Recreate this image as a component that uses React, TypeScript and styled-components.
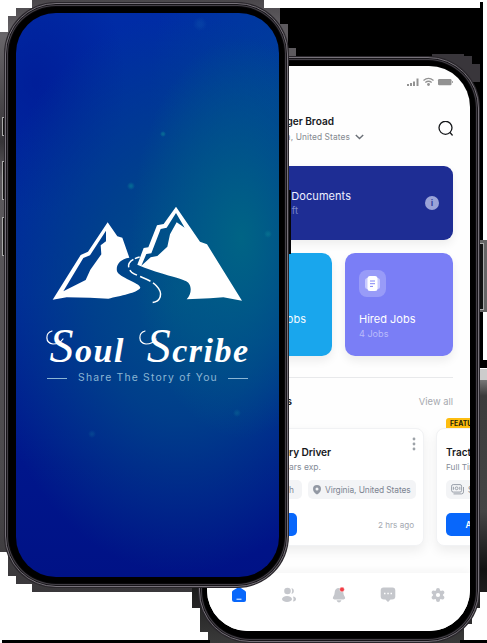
import React from "react";
import styled, { createGlobalStyle } from "styled-components";

const Global = createGlobalStyle`
  * { box-sizing: border-box; }
  body { margin: 0; background: #fff; font-family: Inter, "Liberation Sans", sans-serif; }
`;

const Stage = styled.main`
  display: grid;
  grid-template: 643px / 487px;
  width: 487px;
  height: 643px;
  overflow: hidden;
  > * { grid-area: 1 / 1; }
`;

const Phone = styled.section<{ $x: number; $y: number; $w: number; $h: number; $pad: string }>`
  isolation: isolate;
  width: ${p => p.$w}px;
  height: ${p => p.$h}px;
  margin: ${p => p.$y}px 0 0 ${p => p.$x}px;
  padding: ${p => p.$pad};
  border-radius: 51px;
  background: #000;
  border: 1px solid #77727a;
  box-shadow: inset 0 0 0 1px #161418, inset 0 0 0 2px #444047, inset 0 0 0 3px #09080a, 0 0 0 1px #29262b;
`;

const Splash = styled.div`
  height: 100%;
  border-radius: 40px;
  display: flex;
  flex-direction: column;
  align-items: center;
  padding-top: 182px;
  color: #fff;
  background:
    radial-gradient(circle at 115px 173px, #08869a88 0 1px, transparent 4px),
    radial-gradient(circle at 184px 11px, #1460b044 0 2px, transparent 7px),
    radial-gradient(circle at 147px 121px, #0d879988 0 1px, transparent 3px),
    radial-gradient(circle at 252px 221px, #0d879966 0 1px, transparent 4px),
    radial-gradient(circle at 221px 400px, #0d709966 0 1px, transparent 4px),
    radial-gradient(circle at 76px 421px, #0d609966 0 1px, transparent 4px),
    radial-gradient(ellipse 110px 200px at 225px 225px, #006485 0, #00608799 45%, transparent 100%),
    radial-gradient(ellipse 200px 280px at 165px 280px, #005088 0, #004689cc 45%, transparent 100%),
    radial-gradient(ellipse 130px 190px at 263px 80px, #004a94aa, transparent),
    radial-gradient(ellipse 90px 130px at 20px 70px, #00149088, transparent),
    linear-gradient(#002ca6 0, #00279a 50%, #00168b 80%, #001286 100%);
`;

const Wordmark = styled.h1`
  position: relative;
  width: 204px;
  height: 48px;
  margin: 9px 0 0;
  display: flex;
  justify-content: space-between;
  align-items: center;
  padding: 0 0 0 4px;
  font: italic 700 34px/48px "Liberation Serif", serif;
  letter-spacing: 1.5px;
  span::first-letter { font-size: 48px; font-weight: 400; }
`;

const Swash = styled.svg`
  position: absolute;
  inset: 0;
`;

const Tagline = styled.div`
  display: flex;
  align-items: center;
  gap: 11px;
  margin-top: -1px;
  font-size: 10.4px;
  line-height: 14px;
  letter-spacing: 1.18px;
  color: #8bb6d4;
  white-space: nowrap;
  &::before, &::after { content: ""; width: 20px; height: 1px; background: #8bb6d4; }
  &::after { margin-left: -1px; }
`;

const Home = styled.div`
  height: 100%;
  width: 263px;
  border-radius: 41px;
  overflow: hidden;
  display: flex;
  flex-direction: column;
  background: #fefefe;
  padding: 0 17px;
`;

const StatusBar = styled.div`
  display: flex;
  justify-content: flex-end;
  align-items: center;
  height: 12px;
  margin-top: 10px;
`;

const Header = styled.header`
  display: flex;
  justify-content: space-between;
  align-items: center;
  height: 32px;
  margin-top: 25px;
`;

const Line = styled.div<{ $w?: number; $size: number; $lh: number; $color?: string; $weight?: number; $ls?: number }>`
  display: flex;
  justify-content: ${p => (p.$w ? "flex-end" : "flex-start")};
  align-items: center;
  width: ${p => (p.$w ? `${p.$w}px` : "auto")};
  font-size: ${p => p.$size}px;
  line-height: ${p => p.$lh}px;
  font-weight: ${p => p.$weight ?? 400};
  letter-spacing: ${p => p.$ls ?? 0}px;
  color: ${p => p.$color ?? "#17191c"};
  white-space: nowrap;
  svg { margin-left: 5px; flex: none; }
`;

const Banner = styled.div`
  display: flex;
  justify-content: space-between;
  align-items: center;
  height: 74px;
  margin-top: 21px;
  padding-right: 14px;
  border-radius: 9px;
  background: #1e2d94;
  box-shadow: 0 4px 10px #00000012;
`;

const Info = styled.span`
  width: 14px;
  height: 14px;
  border-radius: 50%;
  background: #9aa3d8;
  color: #37459f;
  font: 700 9px/14px Inter, sans-serif;
  text-align: center;
`;

const Cards = styled.div`
  display: grid;
  grid-template-columns: 1fr 1fr;
  gap: 13px;
  margin-top: 13px;
`;

const StatCard = styled.article<{ $bg: string }>`
  height: 103px;
  border-radius: 10px;
  padding: 17px 14px 0;
  background: ${p => p.$bg};
  box-shadow: 0 5px 10px #00000012;
`;

const IconTile = styled.div`
  width: 27px;
  height: 27px;
  border-radius: 8px;
  margin-bottom: 14px;
  display: grid;
  place-items: center;
  background: #ffffff3b;
`;

const SectionHead = styled.div`
  display: flex;
  justify-content: space-between;
  align-items: center;
  height: 48px;
  margin: 21px 0 2px;
  border-top: 1px solid #e8e9eb;
`;

const JobList = styled.div`
  display: flex;
  gap: 12px;
  margin-top: 1px;
`;

const Job = styled.article`
  position: relative;
  flex: none;
  width: 200px;
  height: 118px;
  padding: 15px 7px 0 9px;
  border: 1px solid #f1f2f4;
  border-radius: 8px;
  background: #fff;
  box-shadow: 0 5px 12px #00000012;
`;

const Badge = styled.span`
  position: absolute;
  left: 9px;
  top: -11px;
  height: 10px;
  padding: 0 4px;
  border-radius: 3px 3px 0 0;
  background: #fdbd10;
  color: #241d0a;
  font-size: 6.9px;
  line-height: 11px;
  font-weight: 700;
`;

const Dots = styled.svg`
  position: absolute;
  right: 7px;
  top: 8px;
`;

const Chips = styled.div`
  display: flex;
  gap: 6px;
  margin-top: 6px;
`;

const Chip = styled.span<{ $w: number; $end?: boolean }>`
  display: flex;
  align-items: center;
  justify-content: ${p => (p.$end ? "space-between" : "flex-start")};
  gap: 4px;
  width: ${p => p.$w}px;
  flex: none;
  height: 19px;
  padding: 0 8px 0 5px;
  border-radius: 5px;
  background: #f3f4f6;
  color: #7d8592;
  font-size: 8.4px;
  letter-spacing: -0.08px;
  white-space: nowrap;
  svg { flex: none; }
`;

const JobFoot = styled.div`
  display: flex;
  justify-content: space-between;
  align-items: center;
  margin: 14px 2px 0 0;
`;

const Apply = styled.button`
  width: 63px;
  height: 23px;
  border: 0;
  border-radius: 5px;
  padding: 0;
  background: #0867fb;
  color: #fff;
  font: 600 8.5px Inter, sans-serif;
`;

const TabBar = styled.nav`
  display: flex;
  justify-content: space-between;
  align-items: flex-start;
  margin: 27px -17px 0;
  padding: 14px 24px 0;
  height: 58px;
  background: #fff;
  box-shadow: 0 -3px 7px #00000009;
`;

/* Dark stepped shadow and plates behind both devices. */
const Backdrop = () => (
  <svg width="487" height="643" shapeRendering="crispEdges">
    <defs>
      <linearGradient id="leftFade" x2="0" y2="1">
        <stop offset="0" stopColor="#4a474b" /><stop offset=".06" stopColor="#69666a" /><stop offset=".24" stopColor="#363437" />
        <stop offset=".3" stopColor="#5c595d" /><stop offset=".8" stopColor="#4b494c" />
        <stop offset="1" stopColor="#39373a" />
      </linearGradient>
      <linearGradient id="rightFade" x2="0" y2="1">
        <stop offset="0" stopColor="#777" /><stop offset=".06" stopColor="#3b3b3b" />
        <stop offset=".5" stopColor="#444" /><stop offset=".72" stopColor="#111" /><stop offset="1" stopColor="#3a3a3a" />
      </linearGradient>
    </defs>
    <path d="M280 8H480V2H483V240H470V80H280Z" fill="#000" />
    <path d="M32 0H264V8H280V24H288V48H296V56H288V580H264V592H32V584H16V576H8V552H0V32H8V16H16V8H32Z" fill="url(#leftFade)" />
    <path d="M280 8H288V56H280Z" fill="#000" />
    <path d="M280 24H288V48H296V56H280Z" fill="#5d5a5e" />
    <path d="M432 54H464V56H472V64H480V82H432Z" fill="#39363b" />
    <path d="M480 240H487V312H480Z" fill="#666" />
    <path d="M480 312H483V360H487V368H480Z" fill="#000" />
    <path d="M480 369H487V380H480Z" fill="#ccc" />
    <path d="M470 380H487V592H480V608H472V624H464V643H208V632H200V608H192V580H470Z" fill="url(#rightFade)" />
    <path d="M2 640H210V643H2ZM460 640H487V643H460Z" fill="#000" />
    <path d="M2.500 117.500H7V135.500H2.500ZM2.500 161.500H7V199.500H2.500ZM2.500 217.500H7V255.500H2.500ZM478 243.500H483.500V309.500H478Z" fill="#111" stroke="#aaa" />
  </svg>
);

const SideKey = styled.i`
  isolation: isolate;
  width: 4px;
  height: 64px;
  margin: 190px 0 0 287px;
  background: #050507;
`;

const Logo = styled.svg`
  margin-left: 5px;
`;

const Mountains = () => (
  <Logo width="220" height="120" viewBox="0 0 660 360" fill="#fff">
    <path fillRule="evenodd" d="M38 314L122 180L144 170L203 82L232 124L247 128L268 188C240 192 227 210 231 229C236 247 300 264 301 278C294 293 240 302 205 311L150 308L80 307ZM70 289L137 255L151 224L184 178L182 151L198 139L198 107L150 181L130 189Z" />
    <path fillRule="evenodd" d="M408 35L480 140L501 148L606 317L550 307L510 310L440 313C460 290 453 262 435 257C410 245 350 235 292 209L311 159L325 157L351 91L371 87ZM304 212L332 187L352 183L382 155L390 118L410 82L434 98L408 54L380 98L362 102L334 175L319 177Z" />
    <path d="M299 186C265 194 257 214 275 232C298 247 330 252 349 272C375 299 357 322 335 323" fill="none" stroke="#fff" strokeWidth="4.500" strokeDasharray="15 5 30 9 27 10 34 9 80" />
  </Logo>
);

const Pin = () => (
  <svg width="8" height="10" viewBox="0 0 8 10"><path fillRule="evenodd" d="M4 0a4 4 0 0 1 4 4c0 2.800-2.500 4.600-4 5.600C2.500 8.600 0 6.800 0 4a4 4 0 0 1 4-4m0 2.400a1.500 1.500 0 1 0 0 3a1.500 1.500 0 0 0 0-3" fill="#9298a3" /></svg>
);

const Cash = () => (
  <svg width="13" height="11" viewBox="0 0 13 11" fill="none" stroke="#999fa9">
    <rect x=".6" y=".6" width="10" height="7.500" rx="1.600" /><path d="M2.500 9.900H10.500Q12.500 9.900 12.500 7.900V3" />
    <circle cx="5.600" cy="4.300" r="1.400" /><path d="M2.400 2.800V5.800M8.800 2.800V5.800" />
  </svg>
);

const MoreDots = () => (
  <Dots width="4" height="14" fill="#9da2a8"><circle cx="2" cy="2" r="1.400" /><circle cx="2" cy="7" r="1.400" /><circle cx="2" cy="12" r="1.400" /></Dots>
);

const App = () => (
  <>
    <Global />
    <Stage>
      <Backdrop />
      <Phone $x={199} $y={57} $w={280} $h={585} $pad="8px 8px 10px 7px">
        <Home>
          <StatusBar>
            <svg width="46" height="10" viewBox="0 0 46 10" fill="#929292">
              <path d="M0 7h2v2H0zM3 6h2v3H3zM6 4.500h2V9H6zM9.500 1.500h2V9h-2z" />
              <path d="M16.500 3.500Q21.500-.7 26.500 3.500M18.300 5.500Q21.500 3 24.700 5.500" fill="none" stroke="#929292" strokeWidth="1.300" />
              <circle cx="21.500" cy="7.500" r="1.400" /><rect x="31" y="2" width="13.500" height="6.300" rx="1.200" /><path d="M45 4h.8v2H45z" />
            </svg>
          </StatusBar>
          <Header>
            <div>
              <Line $w={110} $size={10.1} $lh={16} $weight={600}>Roger Broad</Line>
              <Line $w={140} $size={8.4} $lh={16} $color="#858a91" $ls={0.1}>
                Virginia, United States
                <svg width="9" height="6" viewBox="0 0 9 6" fill="none" stroke="#6b7077" strokeWidth="1.400"><path d="M.8 1L4.500 4.600L8.200 1" /></svg>
              </Line>
            </div>
            <svg width="16" height="16" viewBox="0 0 16 16" fill="none" stroke="#17191c" strokeWidth="1.300" strokeLinecap="round"><circle cx="8.500" cy="6.800" r="6.500" /><path d="M13.200 11.800L15.200 14" /></svg>
          </Header>
          <Banner>
            <div>
              <Line $w={127} $size={11} $lh={15} $color="#eef0ff" $ls={0.05}>My Documents</Line>
              <Line $w={74} $size={9.5} $lh={14} $color="#7c88ca">1 Draft</Line>
            </div>
            <Info>i</Info>
          </Banner>
          <Cards>
            <StatCard $bg="#19a6ed">
              <IconTile />
              <Line $w={68} $size={11} $lh={16} $color="#f3fbff">Open Jobs</Line>
            </StatCard>
            <StatCard $bg="#7a7ef6">
              <IconTile>
                <svg width="15" height="15" viewBox="0 0 15 15"><rect y="2" width="15" height="11" rx="2.500" fill="#c9cbff" /><rect x="2.500" width="10" height="15" rx="2.500" fill="#fff" /><path d="M5 5h5M5 7.700h5M5 10.400h3" stroke="#8286f5" /></svg>
              </IconTile>
              <Line $size={11} $lh={16} $color="#fff">Hired Jobs</Line>
              <Line $size={9.1} $lh={13} $color="#b9bbfb">4 Jobs</Line>
            </StatCard>
          </Cards>
          <SectionHead>
            <Line $w={68} $size={10.5} $lh={14} $weight={600}>Recent Jobs</Line>
            <Line $size={9.4} $lh={14} $color="#a6a9ae">View all</Line>
          </SectionHead>
          <JobList>
            <Job>
              <MoreDots />
              <Line $w={97} $size={10.2} $lh={16} $weight={600} $ls={-0.1}>Delivery Driver</Line>
              <Line $w={87} $size={8.5} $lh={14} $color="#858c98">Full Time, 3 years exp.</Line>
              <Chips>
                <Chip $w={68} $end><Cash />$20/h</Chip>
                <Chip $w={108}><Pin />Virginia, United States</Chip>
              </Chips>
              <JobFoot><Apply>Apply</Apply><Line $size={8.1} $lh={14} $color="#a3a8b0">2 hrs ago</Line></JobFoot>
            </Job>
            <Job>
              <Badge>FEATURED</Badge>
              <Line $size={10} $lh={16} $weight={600}>Tractor Driver</Line>
              <Line $size={8.2} $lh={14} $color="#858c98">Full Time, 2 years exp.</Line>
              <Chips><Chip $w={68}><Cash />$25/h</Chip></Chips>
              <JobFoot><Apply>Apply</Apply></JobFoot>
            </Job>
          </JobList>
          <TabBar>
            <svg width="16" height="16" viewBox="0 0 16 16"><path d="M8 .5L14.500 5V13Q14.500 15 12.500 15H3.500Q1 15 1 13V5Q1 4.200 2 3.500L6.500.8Q8-.1 9.500.8L14 3.700Q15 4.200 15 5.500V13Q15 15 13 15H3" fill="#0867fb" /><path d="M5.500 12.200h5" stroke="#fff" /></svg>
            <svg width="16" height="16" viewBox="0 0 16 16" fill="#c5c7cc"><circle cx="6.500" cy="4" r="3.300" /><ellipse cx="6" cy="12" rx="5" ry="3" /><path d="M10.500.9a3.200 3.200 0 0 1 0 6.200q1.500-3.100 0-6.200M12 9.500q3 .5 3 2.500t-3 2.500q1.200-2.500 0-5" /></svg>
            <svg width="16" height="16" viewBox="0 0 16 16"><path d="M8 1Q3.800 1 3.600 6Q3.500 8 2.500 9.300Q.8 12 3.500 12.500H12.500Q15.200 12 13.500 9.300Q12.500 8 12.400 6Q12.200 1 8 1M5.500 13.300h5Q9.500 15.500 8 15.500T5.500 13.300" fill="#c5c7cc" /><circle cx="11" cy="2.500" r="2.400" fill="#f13d45" stroke="#fff" strokeWidth=".5" /></svg>
            <svg width="16" height="16" viewBox="0 0 16 16"><path d="M3.500.5H12.500Q15.300.5 15.300 3.500V9.500Q15.300 12.500 12 12.500H10.500L8 15L5.500 12.500H4Q.7 12.500.7 9.500V3.500Q.7.5 3.500.5" fill="#c5c7cc" /><path d="M4 6.500h1.500M7.300 6.500h1.500M10.500 6.500H12" stroke="#fff" strokeWidth="1.300" /></svg>
            <svg width="16" height="16" viewBox="0 0 16 16"><g stroke="#c5c7cc" strokeWidth="4" strokeLinecap="round"><path d="M8 3V13M3.600 5.500L12.400 10.500M3.600 10.500L12.400 5.500" /></g><circle cx="8" cy="8" r="5" fill="#c5c7cc" /><circle cx="8" cy="8" r="2.100" fill="#fff" /></svg>
          </TabBar>
        </Home>
      </Phone>
      <SideKey />
      <Phone $x={5} $y={3} $w={283} $h={584} $pad="9px 8px 9px 10px">
        <Splash>
          <Mountains />
          <Wordmark>
            <Swash width="204" height="48" fill="none" stroke="#fff" strokeWidth="1.200" strokeLinecap="round">
              <path d="M6 7C-1 9-1 19 7 20C12 20 15 18 17 15M99 7C92 9 92 19 100 20C105 20 108 18 110 15" />
            </Swash>
            <span>Soul</span><span>Scribe</span>
          </Wordmark>
          <Tagline>Share The Story of You</Tagline>
        </Splash>
      </Phone>
    </Stage>
  </>
);

export default App;
